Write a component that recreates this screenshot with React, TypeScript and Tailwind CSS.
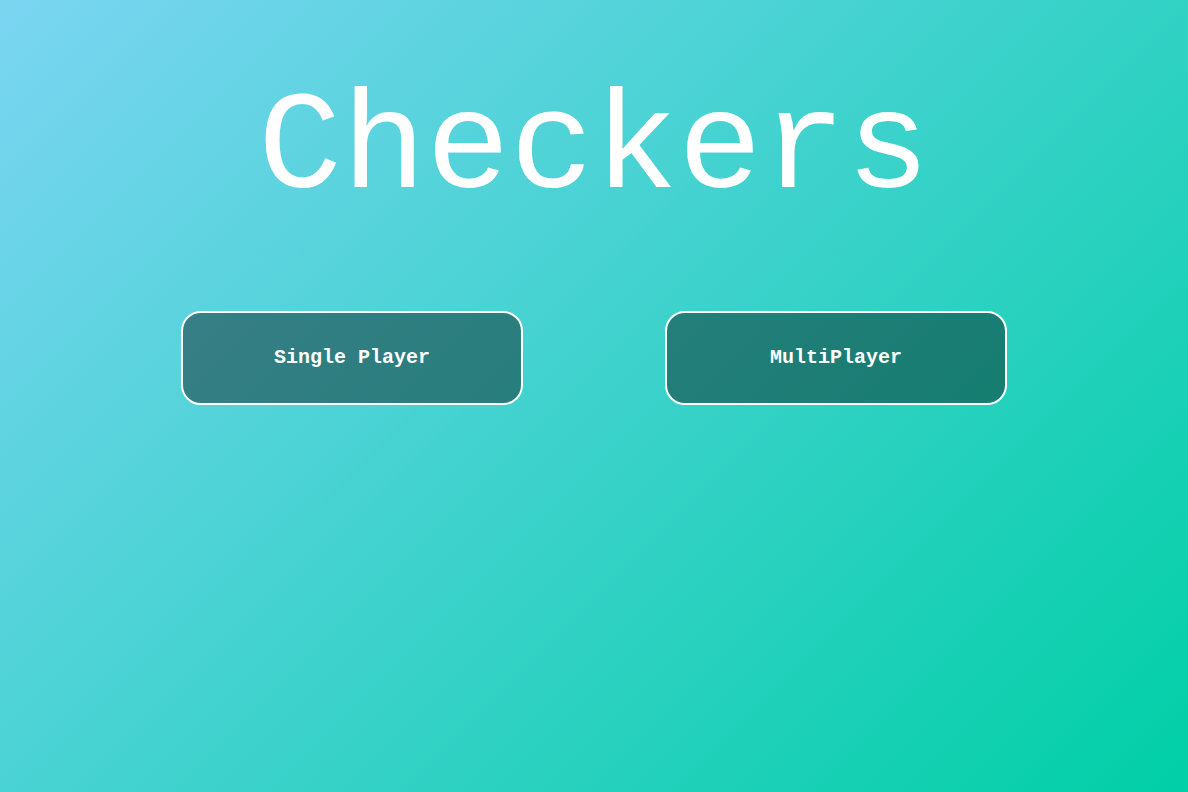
export default function App() {
  const modes = ["Single Player", "MultiPlayer"];

  return (
    <div className="min-h-screen w-full bg-[linear-gradient(135deg,#7bd5f2,#00cfa6)] font-['Courier_New','Nimbus_Mono_PS','FreeMono','Liberation_Mono',monospace] text-white">
      <div className="flex flex-col items-center pt-[70px]">
        <h1 className="text-[140px] leading-[160px] font-normal">Checkers</h1>
        <div className="mt-[81px] flex gap-[142px]">
          {modes.map((mode) => (
            <button
              key={mode}
              type="button"
              className="flex h-[94px] w-[342px] items-center justify-center rounded-[20px] border-2 border-white bg-black/40 text-xl font-bold"
            >
              {mode}
            </button>
          ))}
        </div>
      </div>
    </div>
  );
}
